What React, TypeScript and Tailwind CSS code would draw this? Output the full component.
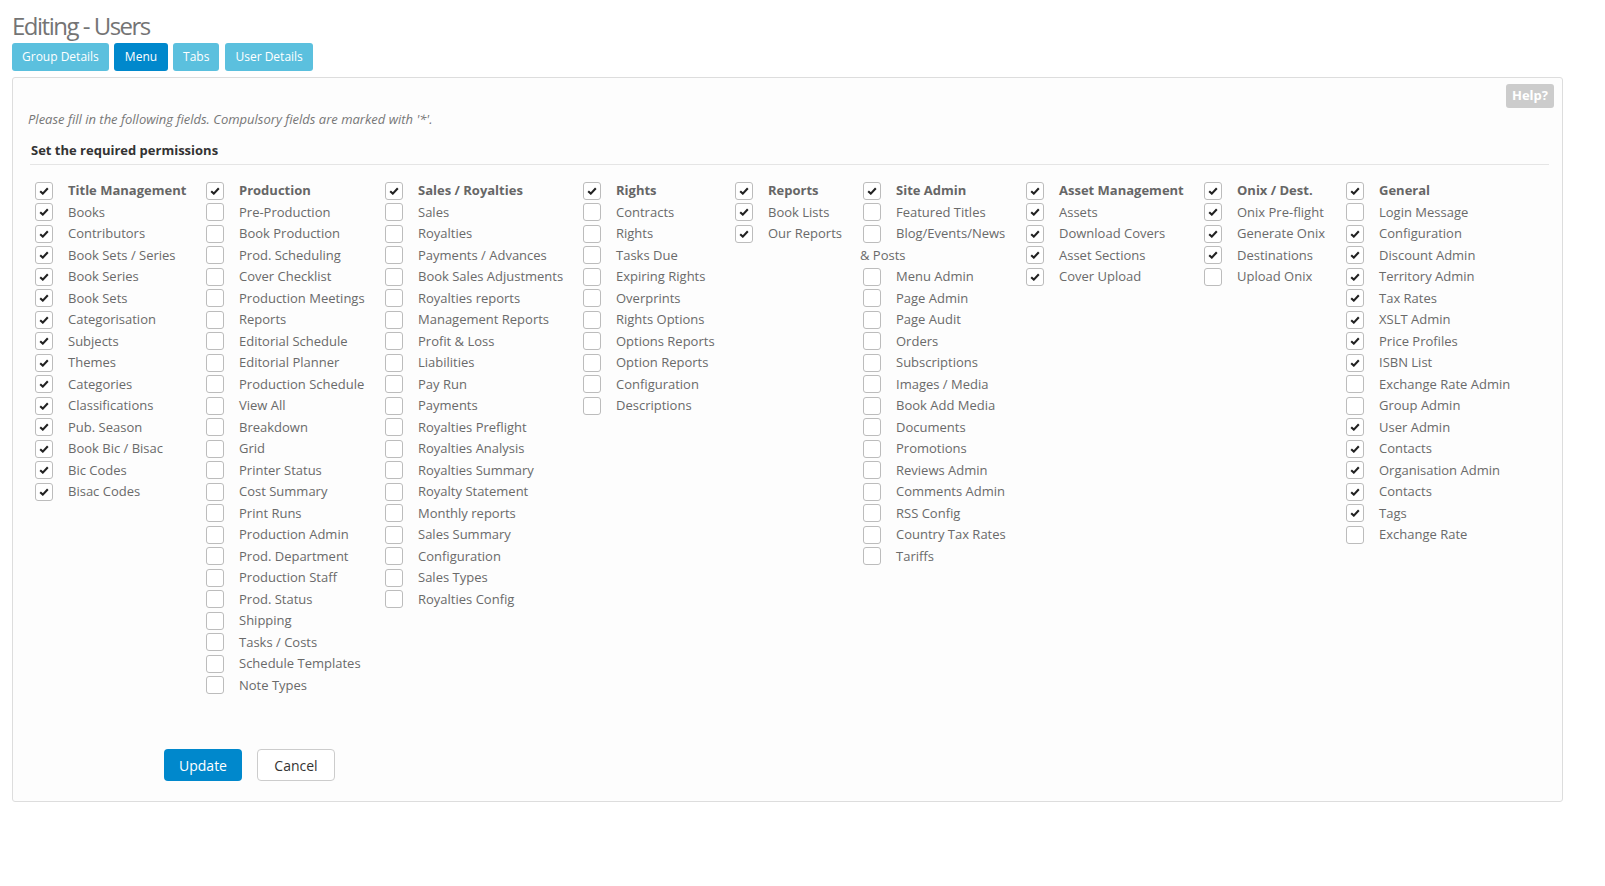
import React from 'react';

interface Perm {
  label: string;
  checked: boolean;
  wrap?: string;
}

interface Group {
  title: string;
  width: number;
  items: Perm[];
}

const all = (labels: string[], checked: boolean): Perm[] => labels.map((label) => ({ label, checked }));

const groups: Group[] = [
  {
    title: 'Title Management',
    width: 171,
    items: all(
      [
        'Books',
        'Contributors',
        'Book Sets / Series',
        'Book Series',
        'Book Sets',
        'Categorisation',
        'Subjects',
        'Themes',
        'Categories',
        'Classifications',
        'Pub. Season',
        'Book Bic / Bisac',
        'Bic Codes',
        'Bisac Codes',
      ],
      true
    ),
  },
  {
    title: 'Production',
    width: 179,
    items: all(
      [
        'Pre-Production',
        'Book Production',
        'Prod. Scheduling',
        'Cover Checklist',
        'Production Meetings',
        'Reports',
        'Editorial Schedule',
        'Editorial Planner',
        'Production Schedule',
        'View All',
        'Breakdown',
        'Grid',
        'Printer Status',
        'Cost Summary',
        'Print Runs',
        'Production Admin',
        'Prod. Department',
        'Production Staff',
        'Prod. Status',
        'Shipping',
        'Tasks / Costs',
        'Schedule Templates',
        'Note Types',
      ],
      false
    ),
  },
  {
    title: 'Sales / Royalties',
    width: 198,
    items: all(
      [
        'Sales',
        'Royalties',
        'Payments / Advances',
        'Book Sales Adjustments',
        'Royalties reports',
        'Management Reports',
        'Profit & Loss',
        'Liabilities',
        'Pay Run',
        'Payments',
        'Royalties Preflight',
        'Royalties Analysis',
        'Royalties Summary',
        'Royalty Statement',
        'Monthly reports',
        'Sales Summary',
        'Configuration',
        'Sales Types',
        'Royalties Config',
      ],
      false
    ),
  },
  {
    title: 'Rights',
    width: 152,
    items: all(
      [
        'Contracts',
        'Rights',
        'Tasks Due',
        'Expiring Rights',
        'Overprints',
        'Rights Options',
        'Options Reports',
        'Option Reports',
        'Configuration',
        'Descriptions',
      ],
      false
    ),
  },
  {
    title: 'Reports',
    width: 128,
    items: all(['Book Lists', 'Our Reports'], true),
  },
  {
    title: 'Site Admin',
    width: 163,
    items: [
      { label: 'Featured Titles', checked: false },
      { label: 'Blog/Events/News', checked: false, wrap: '& Posts' },
      ...all(
        [
          'Menu Admin',
          'Page Admin',
          'Page Audit',
          'Orders',
          'Subscriptions',
          'Images / Media',
          'Book Add Media',
          'Documents',
          'Promotions',
          'Reviews Admin',
          'Comments Admin',
          'RSS Config',
          'Country Tax Rates',
          'Tariffs',
        ],
        false
      ),
    ],
  },
  {
    title: 'Asset Management',
    width: 178,
    items: all(['Assets', 'Download Covers', 'Asset Sections', 'Cover Upload'], true),
  },
  {
    title: 'Onix / Dest.',
    width: 142,
    items: [
      { label: 'Onix Pre-flight', checked: true },
      { label: 'Generate Onix', checked: true },
      { label: 'Destinations', checked: true },
      { label: 'Upload Onix', checked: false },
    ],
  },
  {
    title: 'General',
    width: 190,
    items: [
      { label: 'Login Message', checked: false },
      { label: 'Configuration', checked: true },
      { label: 'Discount Admin', checked: true },
      { label: 'Territory Admin', checked: true },
      { label: 'Tax Rates', checked: true },
      { label: 'XSLT Admin', checked: true },
      { label: 'Price Profiles', checked: true },
      { label: 'ISBN List', checked: true },
      { label: 'Exchange Rate Admin', checked: false },
      { label: 'Group Admin', checked: false },
      { label: 'User Admin', checked: true },
      { label: 'Contacts', checked: true },
      { label: 'Organisation Admin', checked: true },
      { label: 'Contacts', checked: true },
      { label: 'Tags', checked: true },
      { label: 'Exchange Rate', checked: false },
    ],
  },
];

function Checkbox({ checked }: { checked: boolean }) {
  return (
    <span className="ml-[3px] flex h-[18px] w-[18px] shrink-0 items-center justify-center rounded-[3px] border border-[#bcbcbc] bg-white">
      {checked && (
        <svg width="10" height="8" viewBox="0 0 10 8">
          <path d="M1.2 4.2 L3.8 6.6 L8.8 1.2" fill="none" stroke="#222" strokeWidth="2.1" />
        </svg>
      )}
    </span>
  );
}

function Row({ label, checked, bold }: { label: string; checked: boolean; bold?: boolean }) {
  return (
    <div className="flex h-[21.5px] items-center">
      <Checkbox checked={checked} />
      <span className={`ml-[15px] whitespace-nowrap ${bold ? 'font-bold text-[#666]' : 'text-[#6a6a6a]'}`}>
        {label}
      </span>
    </div>
  );
}

function App() {
  return (
    <div
      className="min-h-screen bg-white pl-[12px] text-[13px]"
      style={{ fontFamily: '"Open Sans", "Liberation Sans", sans-serif' }}
    >
      <h1 className="pt-[11px] text-[24px] leading-[30px] tracking-[-1.5px] text-[#747474]">Editing - Users</h1>

      <div className="mt-[2px] flex gap-[5px]">
        <button className="h-[28px] rounded-[3px] bg-[#5bc0de] px-[10px] text-[12px] text-white">Group Details</button>
        <button className="h-[28px] rounded-[3px] bg-[#0088cc] px-[11px] text-[12px] text-white">Menu</button>
        <button className="h-[28px] rounded-[3px] bg-[#5bc0de] px-[10px] text-[12px] text-white">Tabs</button>
        <button className="ml-[1px] h-[28px] rounded-[3px] bg-[#5bc0de] px-[10px] text-[12px] text-white">
          User Details
        </button>
      </div>

      <div className="mt-[6px] w-[1551px] rounded-[3px] border border-[#dddddd] bg-[#fdfdfd] pb-[20px]">
        <div className="flex justify-end pr-[8px] pt-[6px]">
          <span className="flex h-[24px] items-center rounded-[3px] bg-[#cccccc] px-[6px] text-[13px] font-bold text-white">
            Help?
          </span>
        </div>

        <p className="mt-[2px] pl-[15px] text-[13px] leading-[18px] italic text-[#777]">
          Please fill in the following fields. Compulsory fields are marked with '*'.
        </p>

        <div className="ml-[17px] mr-[13px] mt-[13px] border-b border-[#e5e5e5] pb-[5px] pl-[1px] text-[13px] font-bold leading-[18px] text-[#333]">
          Set the required permissions
        </div>

        <div className="ml-[19px] mt-[15px] flex">
          {groups.map((g) => (
            <div key={g.title} className="shrink-0" style={{ width: g.width }}>
              <Row label={g.title} checked bold />
              {g.items.map((item, i) => (
                <React.Fragment key={i}>
                  <Row label={item.label} checked={item.checked} />
                  {item.wrap && (
                    <div className="flex h-[21.5px] items-center whitespace-nowrap text-[#6a6a6a]">{item.wrap}</div>
                  )}
                </React.Fragment>
              ))}
            </div>
          ))}
        </div>

        <div className="ml-[151px] mt-[53px] flex gap-[15px]">
          <button className="h-[32px] w-[78px] rounded-[4px] bg-[#0088cc] text-[14px] text-white">Update</button>
          <button className="h-[32px] w-[78px] rounded-[4px] border border-[#cccccc] bg-white text-[14px] text-[#333]">
            Cancel
          </button>
        </div>
      </div>
    </div>
  );
}

export default App;
